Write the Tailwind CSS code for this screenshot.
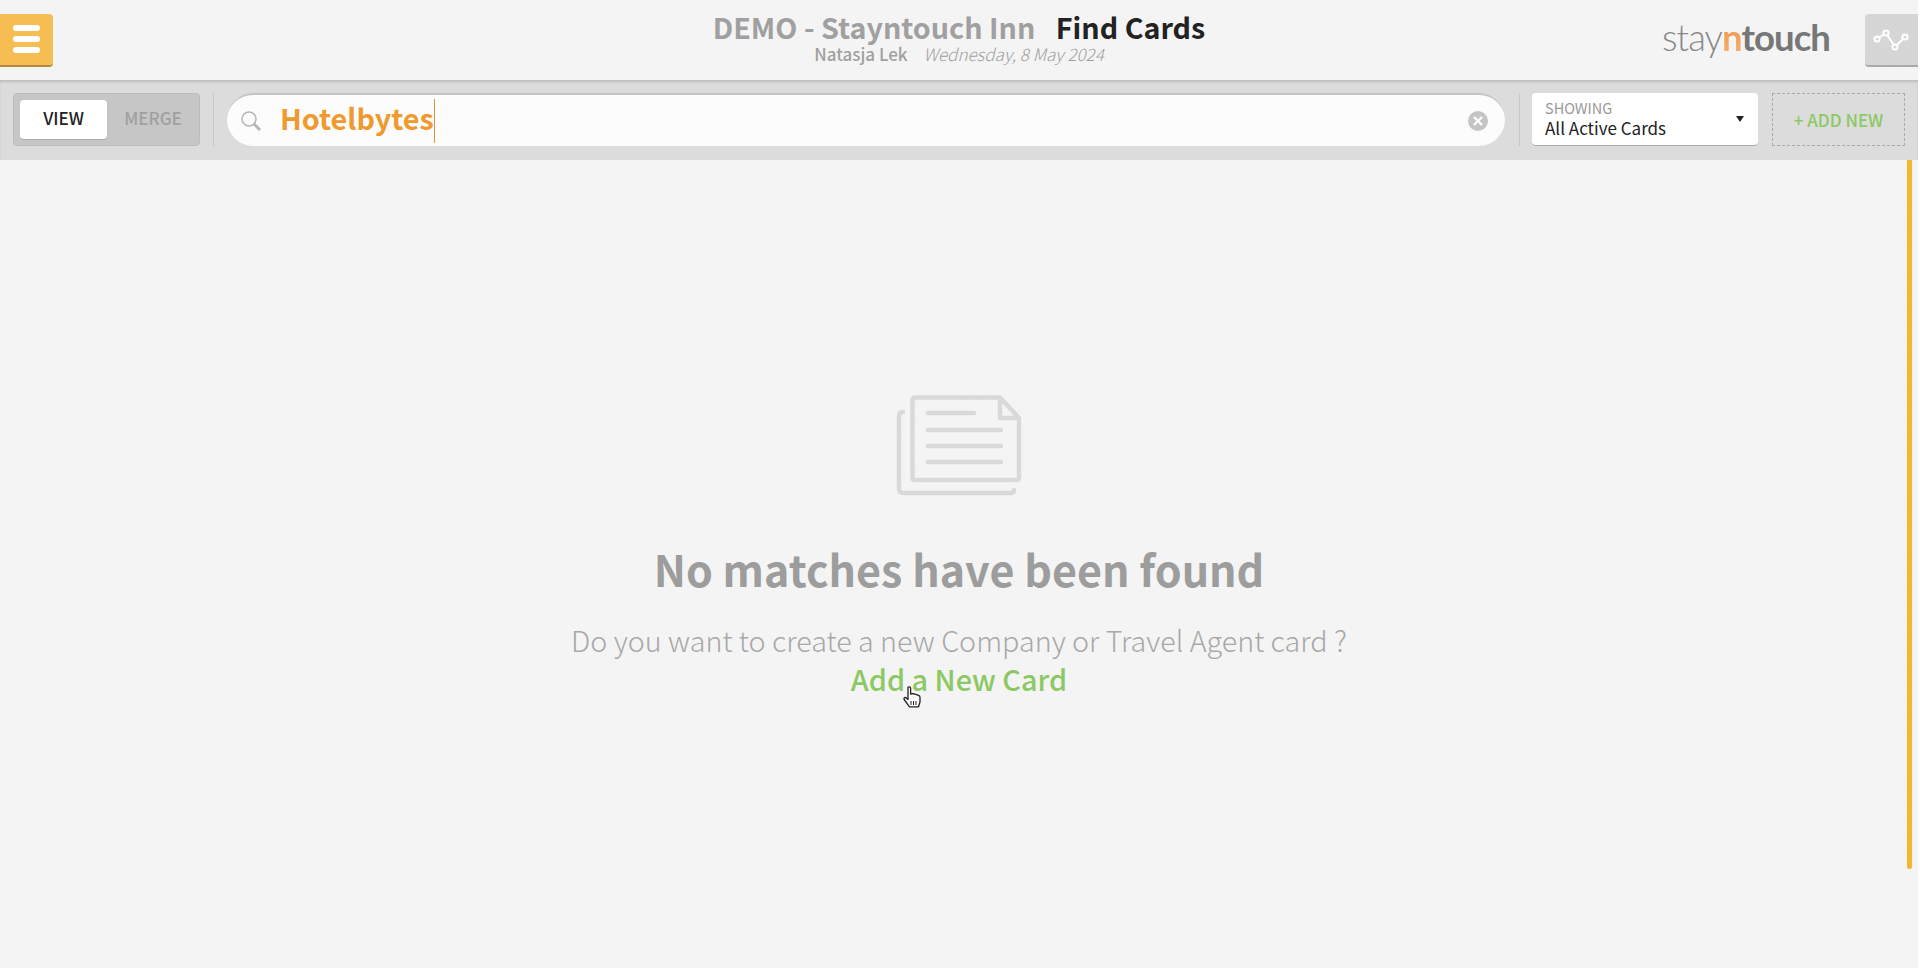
<!DOCTYPE html>
<html lang="en">
<head>
    <meta charset="UTF-8">
    <script src="https://cdn.jsdelivr.net/npm/@tailwindcss/browser@4"></script>
</head>
<body class="bg-white font-['Noto_Sans_CJK_SC','Noto_Sans',sans-serif] h-[968px] overflow-hidden">
<div class="w-[1918px] h-[968px] bg-[#f4f4f4] bg-[repeating-linear-gradient(45deg,#f5f5f5_0,#f5f5f5_1px,#f3f3f3_1px,#f3f3f3_2px)]">
    <!--header-->
    <header class="relative h-20 flex items-center justify-between">
        <button class="w-[53px] h-[53px] bg-[#f5bd52] border-b-2 border-[#b58a3c] rounded-r-sm flex flex-col items-center justify-center gap-[5px]">
            <span class="w-[27px] h-[6px] rounded-full bg-white"></span>
            <span class="w-[27px] h-[6px] rounded-full bg-white"></span>
            <span class="w-[27px] h-[6px] rounded-full bg-white"></span>
        </button>
        <div class="absolute left-0 right-0 top-[11px] text-center">
            <div class="text-[28.7px] leading-[32px] font-bold text-[#a0a0a0]">DEMO - Stayntouch Inn <span class="ml-[14px] text-[#222]">Find Cards</span></div>
            <div class="mt-px text-[17px] leading-[20px] text-[#a0a0a0]"><span class="font-medium">Natasja Lek</span> <span class="ml-3 italic font-light">Wednesday, 8 May 2024</span></div>
        </div>
        <div class="flex items-center gap-[35px]">
            <div class="font-['Lato',sans-serif] text-[36.5px] leading-[44px] pb-[6px] tracking-tight font-light text-[#888]">stay<span class="font-bold text-transparent bg-clip-text bg-linear-to-b from-[#e8923a] to-[#f6b272]">n</span><span class="font-bold text-[#777]">touch</span></div>
            <button class="w-[53px] h-[53px] bg-[#d6d6d6] border-b-2 border-[#a9a9a9] rounded-l-sm">
                <svg width="53" height="51" viewBox="0 0 53 51" fill="none" stroke="#fff" stroke-width="2"><path d="M12 25 L21 19 L30 33 L40 23"/><circle cx="12" cy="25" r="2.6" fill="#d6d6d6"/><circle cx="21" cy="19" r="2.6" fill="#d6d6d6"/><circle cx="30" cy="33" r="2.6" fill="#d6d6d6"/><circle cx="40" cy="23" r="2.6" fill="#d6d6d6"/></svg>
            </button>
        </div>
    </header>

    <!--toolbar-->
    <div class="h-20 pb-px bg-[#dcdcdc] shadow-[inset_0_3px_3px_-1px_rgba(0,0,0,0.14)] flex items-center pl-[13px] pr-[13px]">
        <div class="w-[187px] h-[53px] bg-[#c6c6c6] border border-[#bdbdbd] rounded-sm flex items-center pl-[6px]">
            <div class="w-[87px] h-[40px] pb-[3px] bg-white rounded-sm border-b border-[#aaa] flex items-center justify-center text-[17px] font-medium text-[#222]">VIEW</div>
            <div class="flex-1 pb-[3px] text-center text-[17px] font-medium text-[#a0a0a0]">MERGE</div>
        </div>
        <div class="w-px h-[53px] bg-[#c8c8c8] ml-[13px] mr-[13px]"></div>
        <div class="flex-1 h-[53px] bg-white/90 rounded-full border-t-2 border-[#c4c4c4] flex items-center pl-[13px] pr-[17px]">
            <svg width="22" height="22" viewBox="0 0 22 22" fill="none" stroke="#b5b5b5" stroke-width="1.5"><circle cx="9" cy="9" r="7"/><path d="M14 14 L20 20" stroke-width="3"/></svg>
            <span class="ml-[18px] mb-[5px] text-[28.8px] font-bold text-[#ee9a2e] leading-none">Hotelbytes</span>
            <span class="w-px h-[44px] bg-[#e0922c]"></span>
            <svg class="ml-auto" width="20" height="20" viewBox="0 0 20 20"><circle cx="10" cy="10" r="10" fill="#c4c4c4"/><path d="M6 6 L14 14 M14 6 L6 14" stroke="#fff" stroke-width="2.4"/></svg>
        </div>
        <div class="w-px h-[53px] bg-[#c8c8c8] ml-[14px] mr-[12px]"></div>
        <div class="relative w-[226px] h-[53px] bg-white rounded-sm border-b border-[#aaa] pl-[13px] pt-[6px]">
            <div class="text-[14.5px] leading-[18px] text-[#999]">SHOWING</div>
            <div class="text-[17px] leading-[22px] text-[#222]">All Active Cards</div>
            <span class="absolute right-[14px] top-[23px] w-0 h-0 border-x-[4px] border-x-transparent border-t-[6px] border-t-[#222]"></span>
        </div>
        <div class="ml-[14px] w-[133px] h-[53px] border border-dashed border-[#aaa] flex items-center justify-center text-[17px] font-medium text-[#8cc863]">+ ADD NEW</div>
    </div>

    <!--empty state-->
    <main class="relative h-[808px] flex flex-col items-center pt-[234px]">
        <svg width="128" height="105" viewBox="0 0 128 105" fill="none" stroke="#d9d9d9" stroke-width="4.5" stroke-linecap="round" stroke-linejoin="round">
            <path d="M105 3.5 H20 Q17.5 3.5 17.5 6 V83.5 Q17.5 86 20 86 H121.5 Q124 86 124 83.5 V24 L105 3.5 V24 H124"/>
            <path d="M8 18 Q4 18 4 22 V95 Q4 99 8 99 H115 Q119 99 119 96"/>
            <path d="M33 19 H79 M33 36 H106 M33 52 H106 M33 68 H106"/>
        </svg>
        <h2 class="mt-[41px] text-[43px] leading-[56px] font-bold text-[#9d9d9d]">No matches have been found</h2>
        <p class="mt-[24px] text-[28.7px] leading-[40px] font-light text-[#a8a8a8]">Do you want to create a new Company or Travel Agent card ?</p>
        <a class="-mt-px text-[28.8px] leading-[40px] font-medium text-[#8cc863]">Add a New Card</a>
        <!--mouse pointer-->
        <svg class="absolute left-[903px] top-[526px]" width="18" height="22" viewBox="0 0 18 22" stroke="#222" stroke-width="1.3" stroke-linejoin="round">
            <path fill="#fff" d="M5 2 Q5 .8 6.3 .8 Q7.6 .8 7.6 2 V8 L9.6 7.6 L11.6 8 L13.6 8.6 L16 9.6 Q17 10.2 17 11.5 V16 L15.5 20.8 H6.5 L1.2 13.5 Q.6 12.2 1.6 11.6 Q2.8 11.2 3.6 12.2 L5 13.6 Z"/>
            <path fill="none" stroke-width="1" d="M8 15 V19 M10.5 15 V19 M13 15 V19"/>
        </svg>
        <div class="absolute right-[6px] top-0 w-[5px] h-[709px] bg-[#f5b52c] rounded-b"></div>
    </main>
</div>
</body>
</html>
